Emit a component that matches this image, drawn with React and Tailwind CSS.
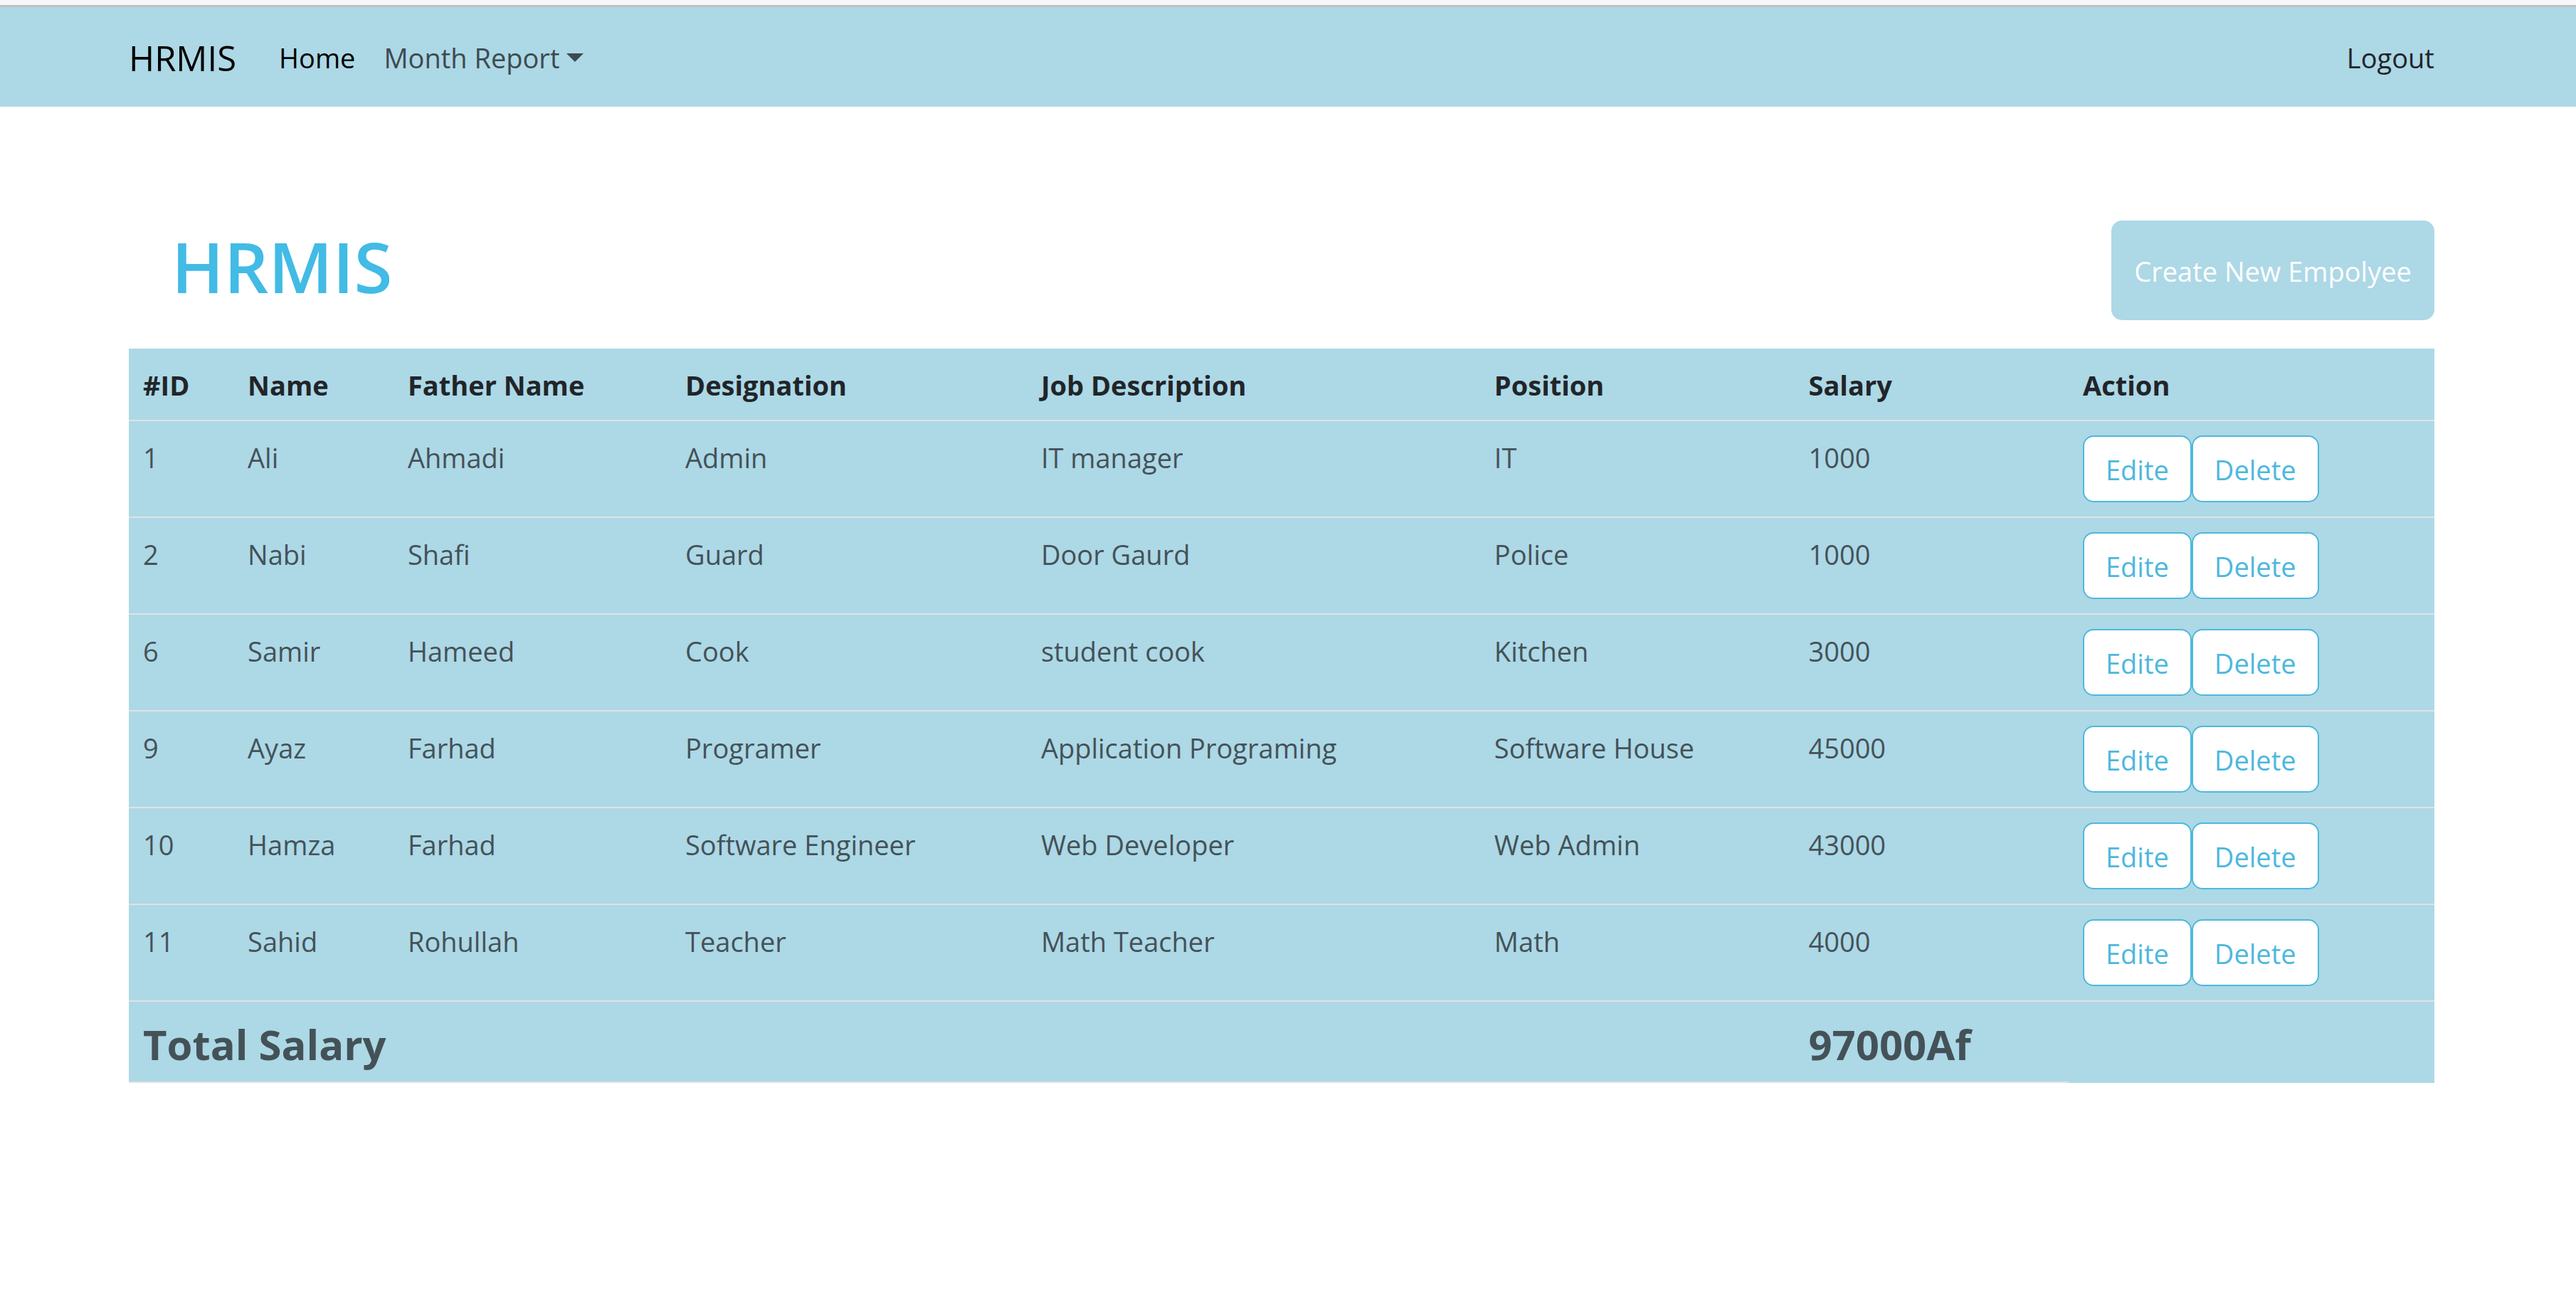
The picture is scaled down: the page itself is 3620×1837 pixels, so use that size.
const employees = [
  { id: 1, name: "Ali", father: "Ahmadi", designation: "Admin", job: "IT manager", position: "IT", salary: 1000 },
  { id: 2, name: "Nabi", father: "Shafi", designation: "Guard", job: "Door Gaurd", position: "Police", salary: 1000 },
  { id: 6, name: "Samir", father: "Hameed", designation: "Cook", job: "student cook", position: "Kitchen", salary: 3000 },
  { id: 9, name: "Ayaz", father: "Farhad", designation: "Programer", job: "Application Programing", position: "Software House", salary: 45000 },
  { id: 10, name: "Hamza", father: "Farhad", designation: "Software Engineer", job: "Web Developer", position: "Web Admin", salary: 43000 },
  { id: 11, name: "Sahid", father: "Rohullah", designation: "Teacher", job: "Math Teacher", position: "Math", salary: 4000 },
];

const columns = [
  { label: "#ID", width: "w-[4.54%]" },
  { label: "Name", width: "w-[6.94%]" },
  { label: "Father Name", width: "w-[12.04%]" },
  { label: "Designation", width: "w-[15.43%]" },
  { label: "Job Description", width: "w-[19.66%]" },
  { label: "Position", width: "w-[13.63%]" },
  { label: "Salary", width: "w-[11.9%]" },
  { label: "Action", width: "" },
];

function Navbar() {
  return (
    <header className="border-t-[3px] border-[#c0c0c0] bg-[#add8e6]">
      <nav className="flex h-[140px] items-center pt-[2px] pr-[5.5%] pl-[5%] text-[38px] leading-[60px]">
        <a href="#" className="mr-[60px] text-[49px] leading-[75px] text-black">HRMIS</a>
        <a href="#home" className="mr-[40px] text-black">Home</a>
        <button type="button" aria-haspopup="menu" className="flex items-center gap-[10px] text-[#3c4b50]">
          Month Report
          <svg viewBox="0 0 24 12" className="h-[12px] w-[24px]" fill="currentColor" aria-hidden="true">
            <path d="M0 0h24L12 12z" />
          </svg>
        </button>
        <a href="#logout" className="ml-auto text-[#212529]">Logout</a>
      </nav>
    </header>
  );
}

function ActionButton({ children }) {
  return (
    <button
      type="button"
      className="rounded-[15px] border-2 border-[#4db8de] bg-white px-[30px] pt-[16px] pb-[14px] text-[#4db8de]"
    >
      {children}
    </button>
  );
}

function EmployeeTable() {
  const total = employees.reduce((sum, e) => sum + e.salary, 0);
  return (
    <table className="w-full table-fixed border-separate border-spacing-0 bg-[#add8e6] text-left leading-[60px] text-[#445258]">
      <thead className="text-[#212529]">
        <tr>
          {columns.map((c) => (
            <th key={c.label} scope="col" className={`${c.width} border-b-2 border-[#dee2e6] px-5 pt-[21px] pb-[19px] font-bold whitespace-nowrap`}>
              {c.label}
            </th>
          ))}
        </tr>
      </thead>
      <tbody className="align-top">
        {employees.map((e) => (
          <tr key={e.id}>
            {[e.id, e.name, e.father, e.designation, e.job, e.position, e.salary].map((value, i) => (
              <td key={i} className="border-b-2 border-[#dee2e6] px-5 pt-[21px] pb-[19px] whitespace-nowrap">{value}</td>
            ))}
            <td className="border-b-2 border-[#dee2e6] p-5">
              <div className="flex">
                <ActionButton>Edite</ActionButton>
                <ActionButton>Delete</ActionButton>
              </div>
            </td>
          </tr>
        ))}
        <tr className="text-[58px] leading-[72px] font-bold">
          <td colSpan={6} className="border-b-2 border-[#dee2e6] px-5 pt-6 pb-4">Total Salary</td>
          <td className="border-b-2 border-[#dee2e6] px-5 pt-6 pb-4">{total}Af</td>
          <td />
        </tr>
      </tbody>
    </table>
  );
}

export default function App() {
  return (
    <div className="min-h-screen bg-white font-['Open_Sans',sans-serif] text-[38px]">
      <div className="h-[7px] bg-[#f7f7f7]" />
      <Navbar />
      <main className="pt-[160px] pr-[5.5%] pl-[5%]">
        <div className="mb-10 flex items-start justify-between pl-[60px]">
          <h1 className="text-[98px] leading-[128px] font-semibold text-[#42bbe5]">HRMIS</h1>
          <button type="button" className="rounded-[15px] bg-[#add8e6] px-8 pt-[41px] pb-[39px] leading-[60px] text-white">
            Create New Empolyee
          </button>
        </div>
        <EmployeeTable />
      </main>
    </div>
  );
}
